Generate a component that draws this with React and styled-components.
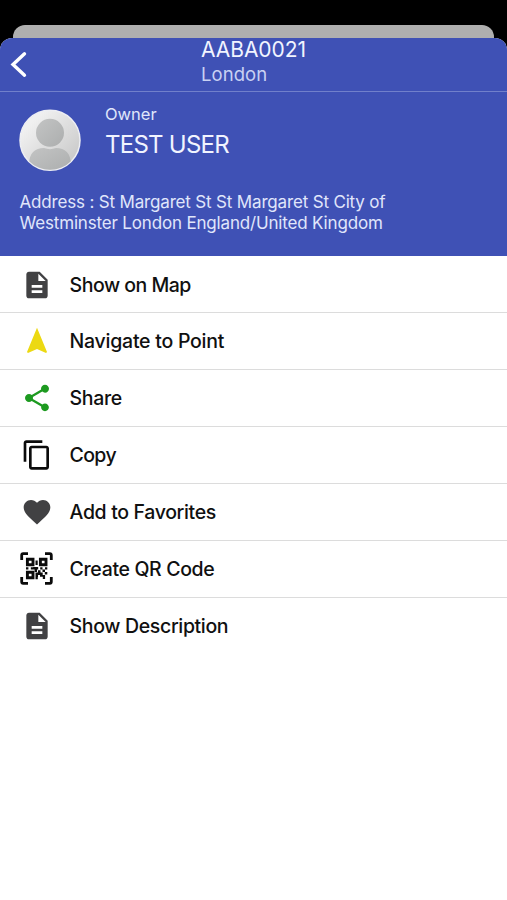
import React from 'react';
import styled, { createGlobalStyle } from 'styled-components';
import {
  MdContentCopy,
  MdDescription,
  MdFavorite,
  MdNavigation,
  MdShare,
} from 'react-icons/md';

const GlobalStyle = createGlobalStyle`
  * {
    box-sizing: border-box;
  }
  body {
    margin: 0;
    background: #000;
    font-family: Inter, 'Liberation Sans', sans-serif;
  }
`;

const Screen = styled.div`
  display: flex;
  flex-direction: column;
  height: 900px;
  padding-top: 25px;
  overflow: hidden;
  background: #000;
`;

const BackSheet = styled.div`
  flex: none;
  height: 28px;
  margin: 0 13px -15px;
  border-radius: 12px 12px 0 0;
  background: #afafaf;
`;

const Sheet = styled.main`
  position: relative;
  flex: 1;
  border-radius: 12px 12px 0 0;
  overflow: hidden;
  background: #fff;
`;

const NavBar = styled.header`
  display: flex;
  height: 54px;
  border-bottom: 1px solid #7180cb;
  background: #3f51b5;
`;

const BackButton = styled.button`
  display: flex;
  width: 201px;
  padding: 13px 0 0 9px;
  border: 0;
  background: none;
  color: #fff;
`;

const Title = styled.h1`
  margin: 0;
  color: #f1f4ff;
  font-size: 21px;
  font-weight: 400;
  line-height: 24px;
  letter-spacing: -0.05px;
`;

const Subtitle = styled.div`
  color: #c9d1f3;
  font-size: 18.5px;
  line-height: 25px;
  letter-spacing: 0.05px;
`;

const Profile = styled.section`
  height: 164px;
  padding: 10px 19px 0;
  background: #3f51b5;
`;

const OwnerRow = styled.div`
  display: flex;
  gap: 24px;
  height: 88px;
`;

const Avatar = styled.svg`
  flex: none;
  width: 62px;
  height: 62px;
  margin-top: 7px;
`;

const OwnerLabel = styled.div`
  color: #e0e6fb;
  font-size: 16.5px;
  line-height: 24px;
`;

const OwnerName = styled.div`
  color: #f1f4ff;
  font-size: 24px;
  line-height: 38px;
  letter-spacing: -0.75px;
`;

const Address = styled.p`
  margin: 2px 0 0 0.5px;
  color: #e0e6fb;
  font-size: 17px;
  line-height: 21px;
  letter-spacing: -0.17px;
`;

const Menu = styled.ul`
  margin: 0;
  padding: 0.6px 0 0;
  list-style: none;
`;

const MenuItem = styled.li`
  display: flex;
  align-items: center;
  height: 56.9px;
  padding-left: 20px;
  border-bottom: 1px solid #dcdcdc;
  color: ${props => props.$color || '#414143'};

  &:last-child {
    border-bottom: 0;
  }
`;

const IconBox = styled.span`
  display: flex;
  flex: none;
  justify-content: center;
  width: 33px;
`;

const Label = styled.span`
  margin-left: 16.6px;
  color: #101010;
  font-size: 19.5px;
  font-weight: 500;
  letter-spacing: ${props => props.$spacing || '-0.35px'};
`;

const QrIcon = () => (
  <svg width="33" height="33" viewBox="0 0 33 33" fill="none" stroke="currentColor">
    <path
      d="M1.7 8V3.2Q1.7 1.7 3.2 1.7H8M25 1.7H29.8Q31.3 1.7 31.3 3.2V8M31.3 25V29.8Q31.3 31.3 29.8 31.3H25M8 31.3H3.2Q1.7 31.3 1.7 29.8V25"
      strokeWidth="2.8"
    />
    <path
      d="M7.4 7.2h5.6v5.6H7.4zM20.4 7.2h5.6v5.6h-5.6zM7.4 20.2h5.6v5.6H7.4z"
      strokeWidth="2.9"
    />
    <path
      fill="currentColor"
      stroke="none"
      d="M15.5 8.5h2.2v4.5h-2.2zM6 15.2h2.4v2.2H6zM10.8 15.2h2.4v2.2h-2.4zM13.2 15h5v2.5h-1.2v2.5h-2.4v-2.5h-1.4zM20.2 15.2h2.3v2.4h-2.3zM25 15.2h2.3v2.4H25zM22.5 17.6H25V20h-2.5zM15.5 20.5H18v-2.3h2.5v2.3h2.2v2.5h2.4V27h-2.3v-2.2H20V23h-2v2h-2.5zM24.8 20h2.5v2.4h-2.5zM15.5 25h2.3v2.2h-2.3z"
    />
  </svg>
);

const items = [
  { label: 'Show on Map', Icon: MdDescription, spacing: '-0.5px' },
  { label: 'Navigate to Point', Icon: MdNavigation, color: '#ecd912', spacing: '-0.25px' },
  { label: 'Share', Icon: MdShare, color: '#1d9a20' },
  { label: 'Copy', Icon: MdContentCopy, color: '#0b0b0b', spacing: '-0.65px' },
  { label: 'Add to Favorites', Icon: MdFavorite },
  { label: 'Create QR Code', Icon: QrIcon, color: '#0b0b0b' },
  { label: 'Show Description', Icon: MdDescription, spacing: '-0.35px' },
];

const App = () => (
  <>
    <GlobalStyle />
    <Screen>
      <BackSheet />
      <Sheet>
        <NavBar>
          <BackButton aria-label="Back">
            <svg width="18" height="28" viewBox="0 0 18 28" fill="none">
              <path
                d="M15.5 2.8L4 13.5L15.5 24.2"
                stroke="currentColor"
                strokeWidth="3.4"
                strokeLinecap="round"
              />
            </svg>
          </BackButton>
          <div>
            <Title>AABA0021</Title>
            <Subtitle>London</Subtitle>
          </div>
        </NavBar>
        <Profile>
          <OwnerRow>
            <Avatar viewBox="0 0 62 62">
              <defs>
                <linearGradient id="disc" x1="0" y1="0" x2="1" y2="1">
                  <stop offset="0.2" stopColor="#f0f0f0" />
                  <stop offset="0.85" stopColor="#cbcbcb" />
                </linearGradient>
                <linearGradient id="person" x1="0" y1="0" x2="1" y2="1">
                  <stop offset="0" stopColor="#c3c4c4" />
                  <stop offset="1" stopColor="#acaeae" />
                </linearGradient>
                <clipPath id="round">
                  <circle cx="31" cy="31.3" r="29.5" />
                </clipPath>
              </defs>
              <circle cx="31" cy="31.2" r="30" fill="url(#disc)" stroke="#edeef3" strokeWidth="1.5" />
              <g fill="url(#person)" clipPath="url(#round)">
                <circle cx="31" cy="23.8" r="14" />
                <path d="M10 56C10 44 16 39 25 39Q31 41.3 37 39C46 39 52 44 52 56V62H10z" />
              </g>
            </Avatar>
            <div>
              <OwnerLabel>Owner</OwnerLabel>
              <OwnerName>TEST USER</OwnerName>
            </div>
          </OwnerRow>
          <Address>
            Address : St Margaret St St Margaret St City of
            <br />
            Westminster London England/United Kingdom
          </Address>
        </Profile>
        <Menu>
          {items.map(({ label, Icon, color, spacing }) => (
            <MenuItem key={label} $color={color}>
              <IconBox>
                <Icon size={32} />
              </IconBox>
              <Label $spacing={spacing}>{label}</Label>
            </MenuItem>
          ))}
        </Menu>
      </Sheet>
    </Screen>
  </>
);

export default App;
